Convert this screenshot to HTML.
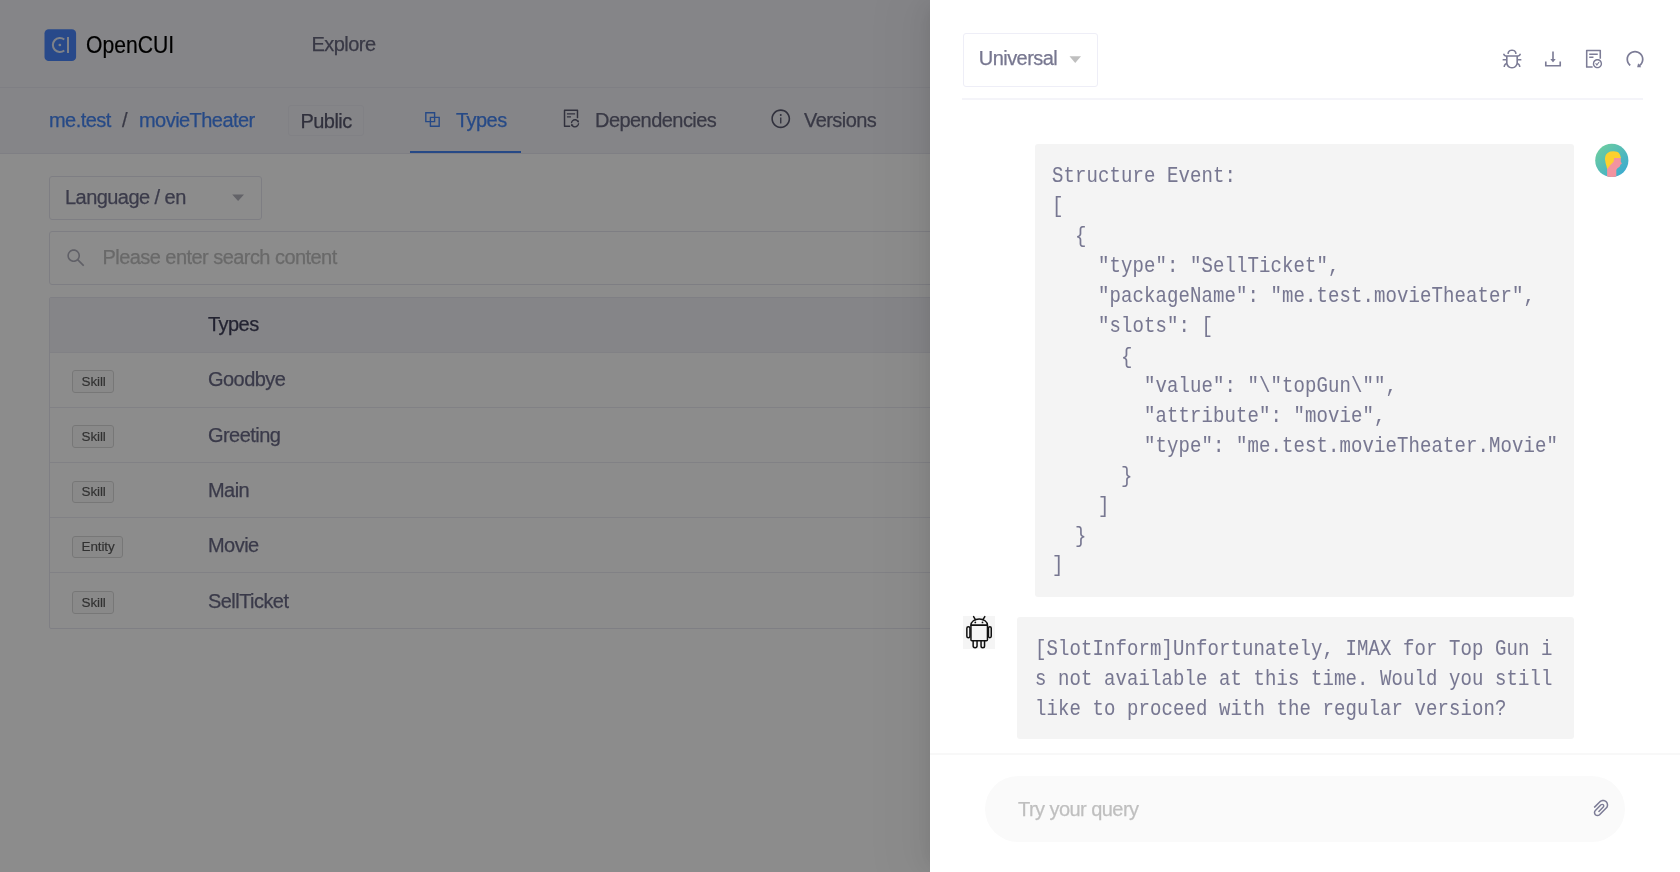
<!DOCTYPE html>
<html><head><meta charset="utf-8">
<style>
*{box-sizing:border-box;margin:0;padding:0}
html,body{width:1680px;height:872px;overflow:hidden;background:#fff;font-family:"Liberation Sans",sans-serif;position:relative}
.abs{position:absolute}
.layer{position:absolute;left:0;top:0;width:1680px;height:872px;will-change:transform}
svg{position:absolute;overflow:visible}
#hdr{left:0;top:0;width:1680px;height:88px;background:#f3f3f8;border-bottom:1px solid #e8e8f1}
#crumb{left:0;top:88px;width:1680px;height:66px;background:#f3f3f8;border-bottom:1px solid #e8e8f1}
.brand{left:86px;top:30px;font-size:24px;color:#000;line-height:30px;transform:scaleX(0.88);transform-origin:0 0;-webkit-text-stroke:0.2px #000}
.t{position:absolute;font-size:20px;line-height:22px;letter-spacing:-0.55px;white-space:nowrap;-webkit-text-stroke:0.25px currentColor}
.link{color:#4686f4}
.gray{color:#68687f}
.tag{border:1px solid #ebebf3;border-radius:3px;background:#f3f3f8}
.sel{border:1px solid #e6e6ee;border-radius:3px;background:#fff}
.tbl{left:49px;top:297px;width:1200px;height:332px;border:1px solid #e8e8f0;border-radius:2px}
.th{left:0;top:0;width:100%;height:55px;background:#f2f2f8;border-bottom:1px solid #ebebf2}
.row{left:0;width:100%;height:55px;border-bottom:1px solid #ebebf2}
.skill{position:absolute;left:72px;height:22.5px;border:1px solid #d9d9d9;border-radius:3px;background:#fafafa}
.skt{position:absolute;left:81.5px;font-size:13.5px;line-height:16px;color:#595959;letter-spacing:-0.1px;-webkit-text-stroke:0.15px currentColor;white-space:nowrap}
.tname{color:#6a6a86}
#mask{left:0;top:0;width:1680px;height:872px;background:rgba(0,0,0,0.45)}
#drawer{left:930px;top:0;width:750px;height:872px;background:#fff;box-shadow:-6px 0 16px -8px rgba(0,0,0,0.08),-9px 0 28px 0 rgba(0,0,0,0.05),-12px 0 48px 16px rgba(0,0,0,0.03)}
.mono{position:absolute;font-family:"Liberation Mono",monospace;font-size:19px;letter-spacing:0.1px;color:#777791;white-space:pre;line-height:25.42px;transform:scaleY(1.18);transform-origin:0 0;-webkit-text-stroke:0.05px currentColor}
</style></head><body>
<div class="layer">
<div id="hdr" class="abs"></div>
<div id="crumb" class="abs"></div>
<!-- logo -->
<svg style="left:44px;top:29px" width="32" height="32" viewBox="0 0 32 32">
  <rect x="0.5" y="0.3" width="31.6" height="31.8" rx="4.2" fill="#4a86fb"/>
  <path d="M20.26 10.56 A7 7 0 1 0 20.26 21.44" fill="none" stroke="#e6ecf8" stroke-width="2"/>
  <circle cx="15.85" cy="16" r="1.35" fill="#e6ecf8"/>
  <path d="M24 8.1 V24" stroke="#e6ecf8" stroke-width="2"/>
</svg>
<div class="abs brand">OpenCUI</div>
<div class="t" style="left:311.5px;top:33.2px;color:#68687f">Explore</div>

<div class="t link" style="left:49px;top:109.2px">me.test</div>
<div class="t gray" style="left:122px;top:109.2px">/</div>
<div class="t link" style="left:139px;top:109.2px">movieTheater</div>
<div class="abs tag" style="left:288px;top:105px;width:76px;height:31px"></div>
<div class="t" style="left:300.5px;top:109.8px;color:#58586e">Public</div>
<svg style="left:422.2px;top:108.6px" width="21" height="21" viewBox="0 0 1024 1024"><path fill="#4686f4" d="M856 376H648V168c0-8.8-7.2-16-16-16H168c-8.8 0-16 7.2-16 16v464c0 8.8 7.2 16 16 16h208v208c0 8.8 7.2 16 16 16h464c8.8 0 16-7.2 16-16V392c0-8.8-7.2-16-16-16zm-480 16v188H220V220h360v156H392c-8.8 0-16 7.2-16 16zm204 52v136H444V444h136zm224 360H444V648h188c8.8 0 16-7.2 16-16V444h156v360z"/></svg>
<svg style="left:560.9px;top:108.4px" width="21" height="21" viewBox="0 0 1024 1024"><path fill="#5a5a70" d="M296 256c-4.4 0-8 3.6-8 8v48c0 4.4 3.6 8 8 8h384c4.4 0 8-3.6 8-8v-48c0-4.4-3.6-8-8-8H296zm192 200v-48c0-4.4-3.6-8-8-8H296c-4.4 0-8 3.6-8 8v48c0 4.4 3.6 8 8 8h184c4.4 0 8-3.6 8-8zm-48 396H208V148h560v344c0 4.4 3.6 8 8 8h56c4.4 0 8-3.6 8-8V108c0-17.7-14.3-32-32-32H168c-17.7 0-32 14.3-32 32v784c0 17.7 14.3 32 32 32h272c4.4 0 8-3.6 8-8v-56c0-4.4-3.6-8-8-8zm104.1-115.6c1.8-34.5 16.2-66.8 40.8-91.4 26.2-26.2 62-41 99.1-41 37.4 0 72.6 14.6 99.1 41 3.2 3.2 6.3 6.6 9.2 10.1L769.2 673a8 8 0 003 14.1l93.3 22.5c5 1.2 9.8-2.6 9.9-7.7l.6-95.4a8 8 0 00-12.9-6.4l-20.3 15.8C805.4 569.6 748.1 540 684 540c-109.9 0-199.6 86.9-204 195.700-.2 4.5 3.5 8.3 8 8.3h48.1c4.3 0 7.8-3.3 8-7.6zM880 744h-48.1c-4.3 0-7.8 3.3-8 7.6-1.8 34.5-16.2 66.8-40.8 91.4-26.2 26.2-62 41-99.1 41-37.4 0-72.6-14.6-99.1-41-3.2-3.2-6.3-6.6-9.2-10.1l23.1-17.9a8 8 0 00-3-14.1l-93.3-22.5c-5-1.2-9.8 2.6-9.9 7.7l-.6 95.4a8 8 0 0012.9 6.4l20.3-15.8C562.6 918.4 619.9 948 684 948c109.9 0 199.6-86.9 204-195.7.2-4.5-3.5-8.3-8-8.3z"/></svg>
<svg style="left:769.6px;top:108.4px" width="21.5" height="21.5" viewBox="0 0 1024 1024"><path fill="#5a5a70" d="M512 64C264.6 64 64 264.6 64 512s200.6 448 448 448 448-200.6 448-448S759.4 64 512 64zm0 820c-205.4 0-372-166.6-372-372s166.6-372 372-372 372 166.6 372 372-166.6 372-372 372z M464 336a48 48 0 1096 0 48 48 0 10-96 0zm72 112h-48c-4.4 0-8 3.6-8 8v272c0 4.4 3.6 8 8 8h48c4.4 0 8-3.6 8-8V456c0-4.4-3.6-8-8-8z"/></svg>
<div class="t link" style="left:456px;top:109.2px">Types</div>
<div class="abs" style="left:410px;top:151px;width:111px;height:2px;background:#4686f4"></div>
<div class="t gray" style="left:595px;top:109.2px">Dependencies</div>
<div class="t gray" style="left:804px;top:109.2px">Versions</div>

<div class="abs sel" style="left:49px;top:176px;width:213px;height:43.5px"></div>
<div class="t" style="left:65px;top:185.6px;color:#6c6c88">Language / en</div>
<svg style="left:0;top:0" width="1" height="1"><path d="M232.2 194.6 H244 L238.1 201 Z" fill="#b4b4be"/></svg>
<div class="abs sel" style="left:49px;top:230.5px;width:1200px;height:54px"></div>
<svg style="left:64.5px;top:247.1px" width="21.6" height="21.6" viewBox="0 0 1024 1024"><path fill="#b0b0bc" d="M909.6 854.5L649.9 594.8C690.2 542.7 712 479 712 412c0-80.2-31.3-155.4-87.9-212.1-56.6-56.7-132-87.9-212.1-87.9s-155.5 31.3-212.1 87.9C143.2 256.5 112 331.8 112 412c0 80.1 31.3 155.5 87.9 212.1C256.5 680.8 331.8 712 412 712c67 0 130.6-21.8 182.7-62l259.7 259.6a8.2 8.2 0 0011.6 0l43.6-43.5a8.2 8.2 0 000-11.6zM570.4 570.4C528 612.7 471.8 636 412 636s-116-23.3-158.4-65.6C211.3 528 188 471.8 188 412s23.3-116.1 65.6-158.4C296 211.3 352.2 188 412 188s116.1 23.2 158.4 65.6S636 352.2 636 412s-23.3 116.1-65.6 158.4z"/></svg>
<div class="t" style="left:102.5px;top:245.9px;color:#bfbfbf">Please enter search content</div>

<div class="abs tbl">
  <div class="abs th"></div>
</div>
<div class="abs" style="left:50px;top:407px;width:1200px;height:1px;background:#ebebf2"></div>
<div class="abs" style="left:50px;top:462px;width:1200px;height:1px;background:#ebebf2"></div>
<div class="abs" style="left:50px;top:517px;width:1200px;height:1px;background:#ebebf2"></div>
<div class="abs" style="left:50px;top:572px;width:1200px;height:1px;background:#ebebf2"></div>
<div class="t" style="left:208px;top:312.8px;color:#40405a">Types</div>
<div class="skill" style="top:370.0px;width:42px"></div><div class="skt" style="top:373.5px">Skill</div>
<div class="t tname" style="left:208px;top:368.3px">Goodbye</div>
<div class="skill" style="top:425.3px;width:42px"></div><div class="skt" style="top:428.8px">Skill</div>
<div class="t tname" style="left:208px;top:423.6px">Greeting</div>
<div class="skill" style="top:480.6px;width:42px"></div><div class="skt" style="top:484.1px">Skill</div>
<div class="t tname" style="left:208px;top:478.9px">Main</div>
<div class="skill" style="top:535.9px;width:50.5px"></div><div class="skt" style="top:539.4px">Entity</div>
<div class="t tname" style="left:208px;top:534.2px">Movie</div>
<div class="skill" style="top:591.2px;width:42px"></div><div class="skt" style="top:594.7px">Skill</div>
<div class="t tname" style="left:208px;top:589.5px">SellTicket</div>
</div>

<div id="mask" class="abs"></div>

<div id="drawer" class="abs" style="will-change:transform">
  <div class="abs sel" style="left:33px;top:32.5px;width:135px;height:54px;border-color:#eeeef7"></div>
  <div class="t" style="left:48.8px;top:47.4px;color:#777790">Universal</div>
  <svg style="left:0;top:0" width="1" height="1"><path d="M139.5 56.2 H151 L145.2 63 Z" fill="#bfbfbf"/></svg>
  <div class="abs" style="left:32px;top:98px;width:681px;height:1.5px;background:#f4f4f9"></div>

  <!-- toolbar icons (drawer coords) -->
  <svg style="left:571.3px;top:47.9px" width="22" height="22" viewBox="0 0 1024 1024"><path fill="#7c7c96" d="M304 280h56c4.4 0 8-3.6 8-8 0-28.3 5.9-53.2 17.1-73.5 10.6-19.4 26-34.8 45.4-45.4C450.9 142 475.7 136 504 136h16c28.3 0 53.2 5.9 73.5 17.1 19.4 10.6 34.8 26 45.4 45.4C650 218.9 656 243.7 656 272c0 4.4 3.6 8 8 8h56c4.4 0 8-3.6 8-8 0-40-8.8-76.7-25.9-108.1a184.31 184.31 0 00-74-74C596.7 72.8 560 64 520 64h-16c-40 0-76.7 8.8-108.1 25.9a184.31 184.31 0 00-74 74C304.8 195.3 296 232 296 272c0 4.4 3.6 8 8 8z M940 512H792V412c76.8 0 139-62.2 139-139 0-4.4-3.6-8-8-8h-60a8 8 0 00-8 8 63 63 0 01-63 63H232a63 63 0 01-63-63c0-4.4-3.6-8-8-8h-60a8 8 0 00-8 8c0 76.8 62.2 139 139 139v100H84a8 8 0 00-8 8v56a8 8 0 008 8h148v96c0 6.5.2 13 .7 19.3C164.1 728.6 116 796.7 116 876c0 4.4 3.6 8 8 8h56a8 8 0 008-8c0-44.2 23.9-82.9 59.6-103.7a273 273 0 0022.7 49c24.3 41.5 59 76.2 100.5 100.5S460.5 956 512 956s99.8-13.9 141.3-38.2a281.38 281.38 0 00123.2-149.5A120 120 0 01836 876c0 4.4 3.6 8 8 8h56a8 8 0 008-8c0-79.3-48.1-147.4-116.7-176.7.4-6.4.7-12.8.7-19.3v-96h148a8 8 0 008-8v-56a8 8 0 00-8-8zM716 680c0 36.8-9.7 72-27.8 102.9-17.7 30.3-43 55.6-73.3 73.3C584 874.3 548.8 884 512 884s-72-9.7-102.9-27.8c-30.3-17.7-55.6-43-73.3-73.3A202.75 202.75 0 01308 680V412h408v268z"/></svg>
  <svg style="left:612.0999999999999px;top:47.9px" width="22" height="22" viewBox="0 0 1024 1024"><path fill="#7c7c96" d="M505.7 661a8 8 0 0012.6 0l112-141.7c4.1-5.2.4-12.9-6.3-12.9h-74.1V168c0-4.4-3.6-8-8-8h-60c-4.4 0-8 3.6-8 8v338.3H400c-6.7 0-10.4 7.7-6.3 12.9l112 141.8zM878 626h-60c-4.4 0-8 3.6-8 8v154H214V634c0-4.4-3.6-8-8-8h-60c-4.4 0-8 3.6-8 8v198c0 17.7 14.3 32 32 32h684c17.7 0 32-14.3 32-32V634c0-4.4-3.6-8-8-8z"/></svg>
  <svg style="left:653.2px;top:47.9px" width="22" height="22" viewBox="0 0 1024 1024"><path fill="#7c7c96" d="M688 312v-48c0-4.4-3.6-8-8-8H296c-4.4 0-8 3.6-8 8v48c0 4.4 3.6 8 8 8h384c4.4 0 8-3.6 8-8zm-392 88c-4.4 0-8 3.6-8 8v48c0 4.4 3.6 8 8 8h184c4.4 0 8-3.6 8-8v-48c0-4.4-3.6-8-8-8H296zm376 116c-119.3 0-216 96.7-216 216s96.7 216 216 216 216-96.7 216-216-96.7-216-216-216zm107.5 323.5C750.8 868.2 712.6 884 672 884s-78.8-15.8-107.5-44.5C535.8 810.8 520 772.6 520 732s15.8-78.8 44.5-107.5C593.2 595.8 631.4 580 672 580s78.8 15.8 107.5 44.5C808.2 653.2 824 691.4 824 732s-15.8 78.8-44.5 107.5zM761 656h-44.3c-2.6 0-5 1.2-6.5 3.300l-63.5 87.8-23.1-31.9a7.92 7.92 0 00-6.5-3.3H573c-6.5 0-10.3 7.4-6.5 12.7l73.8 102.1c3.2 4.4 9.7 4.4 12.9 0l114.2-158c3.9-5.3.1-12.7-6.4-12.7zM440 852H208V148h560v344c0 4.4 3.6 8 8 8h56c4.4 0 8-3.6 8-8V108c0-17.7-14.3-32-32-32H168c-17.7 0-32 14.3-32 32v784c0 17.700 14.3 32 32 32h272c4.4 0 8-3.6 8-8v-56c0-4.4-3.6-8-8-8z"/></svg>
  <svg style="left:694px;top:47.9px" width="22" height="22" viewBox="0 0 1024 1024"><path fill="#7c7c96" d="M758.2 839.1C851.8 765.9 912 651.9 912 523.9 912 303 733.5 124.3 512.6 124 291.4 123.7 112 302.8 112 523.9c0 125.2 57.5 236.9 147.6 310.2 3.5 2.8 8.6 2.2 11.4-1.3l39.4-50.5c2.700-3.400 2.100-8.300-1.200-11.100-8.100-6.600-15.900-13.700-23.400-21.200a318.64 318.64 0 01-68.6-101.7C200.4 609 192 567.1 192 523.9s8.4-85.1 25.1-124.5c16.1-38.1 39.2-72.3 68.6-101.7 29.4-29.4 63.6-52.5 101.7-68.6C426.9 212.4 468.8 204 512 204s85.1 8.4 124.5 25.1c38.1 16.1 72.3 39.2 101.7 68.6 29.4 29.4 52.5 63.6 68.6 101.7 16.7 39.4 25.1 81.3 25.1 124.5s-8.4 85.100-25.1 124.5a318.64 318.64 0 01-68.6 101.7c-9.3 9.3-19.1 18-29.3 26L668.2 724a8 8 0 00-14.1 3l-39.6 162.2c-1.2 5 2.6 9.9 7.7 9.9l167 .8c6.7 0 10.5-7.7 6.3-12.9l-37.3-47.9z"/></svg>

  <!-- avatar -->
  <svg style="left:665px;top:144px" width="34" height="34" viewBox="0 0 34 34">
    <defs>
      <linearGradient id="ag" x1="0" y1="0" x2="1" y2="1"><stop offset="0" stop-color="#72d19a"/><stop offset="1" stop-color="#36a6d6"/></linearGradient>
      <clipPath id="ac"><circle cx="16.8" cy="16.4" r="16.6"/></clipPath>
    </defs>
    <circle cx="16.8" cy="16.4" r="16.6" fill="url(#ag)"/>
    <g clip-path="url(#ac)">
      <path d="M12.1 34 V25 Q12 21 13 18 L19 13 H25.8 V17.7 L26.9 19.6 L25.4 20.8 Q25 22.8 23.9 23.3 Q21.8 24.4 21.3 26 V34 Z" fill="#f3939f"/>
      <path d="M12.3 24.9 Q10.2 19 9.9 14.8 Q10 9.5 15.2 7.6 Q19 6.8 22 7.8 Q25.3 9 25.8 14.1 H19.1 Q18.9 16 18.6 17.7 Q15.5 20.5 12.3 24.9 Z" fill="#fdd02e"/>
    </g>
  </svg>

  <div class="abs" style="left:105px;top:144px;width:539px;height:453px;background:#f4f4f4;border-radius:3px"></div>
  <div class="mono" style="left:122px;top:162px">Structure Event:
[
  {
    "type": "SellTicket",
    "packageName": "me.test.movieTheater",
    "slots": [
      {
        "value": "\"topGun\"",
        "attribute": "movie",
        "type": "me.test.movieTheater.Movie"
      }
    ]
  }
]</div>

  <!-- android -->
  <div class="abs" style="left:33px;top:616px;width:32px;height:33px;background:#f5f5f5"></div>
  <svg style="left:0;top:0" width="1" height="1">
    <g stroke="#111" stroke-width="1.5" fill="none" stroke-linecap="round" stroke-linejoin="round">
      <path d="M40.95 625.2 A8.25 6.3 0 0 1 57.45 625.2 Z"/>
      <path d="M43.6 616.6 L45.4 619.6 M54.8 616.6 L53 619.6"/>
      <path d="M40.95 625.2 H57.45 V639.8 Q57.45 640.85 56.4 640.85 H42 Q40.95 640.85 40.95 639.8 Z"/>
      <rect x="36.85" y="626.85" width="3.1" height="10.8" rx="1.5"/>
      <rect x="58.45" y="626.85" width="2.8" height="10.8" rx="1.4"/>
      <path d="M43.15 640.85 V645.8 A1.95 1.95 0 0 0 47.05 645.8 V640.85"/>
      <path d="M51.05 640.85 V645.95 A1.75 1.75 0 0 0 54.55 645.95 V640.85"/>
    </g>
    <circle cx="45.3" cy="622.4" r="0.9" fill="#111"/>
    <circle cx="52.5" cy="622.4" r="0.9" fill="#111"/>
  </svg>

  <div class="abs" style="left:87px;top:617px;width:557px;height:122px;background:#f4f4f4;border-radius:3px"></div>
  <div class="mono" style="left:105px;top:634.5px">[SlotInform]Unfortunately, IMAX for Top Gun i
s not available at this time. Would you still
like to proceed with the regular version?</div>

  <div class="abs" style="left:0;top:753px;width:750px;height:2px;background:#f8f8f8"></div>
  <div class="abs" style="left:55px;top:776px;width:640px;height:66px;background:#fafafa;border-radius:33px"></div>
  <div class="t" style="left:88px;top:798.1px;color:#bfbfbf">Try your query</div>
  <!-- paperclip -->
  <svg style="left:660px;top:797.2px" width="22" height="22" viewBox="0 0 1024 1024">
    <path fill="#7c7c96" d="M779.3 196.6c-94.2-94.2-247.6-94.2-341.7 0l-261 260.8c-1.7 1.7-2.6 4-2.6 6.4s.9 4.7 2.6 6.4l36.9 36.9a9 9 0 0012.7 0l261-260.8c32.4-32.4 75.5-50.2 121.3-50.2s88.9 17.8 121.2 50.2c32.4 32.4 50.2 75.5 50.2 121.2 0 45.8-17.8 88.8-50.2 121.2l-266 265.9-43.1 43.1c-40.3 40.3-105.8 40.3-146.1 0-19.5-19.5-30.2-45.4-30.2-73s10.7-53.5 30.2-73l263.9-263.8c7.3-7.2 16.9-11.2 27.2-11.2h.1c10.3 0 19.8 4 27 11.2 7.3 7.3 11.2 16.9 11.2 27.2 0 10.200-4 19.8-11.2 27l-215.7 215.6a9 9 0 000 12.7l36.9 36.9a9 9 0 0012.7 0l215.6-215.6c19.9-19.9 30.8-46.3 30.8-74.4s-11-54.6-30.8-74.4c-41.1-41.1-107.9-41-149 0L463 364 224.8 602.1A172.22 172.22 0 00174 724.8c0 46.3 18.1 89.8 50.8 122.5 33.9 33.8 78.3 50.700 122.7 50.7 44.4 0 88.8-16.9 122.6-50.7l309.2-309C824.8 492.7 850 432 850 367.5c.1-64.6-25.1-125.3-70.7-170.9z"/>
  </svg>
</div>
</body></html>
